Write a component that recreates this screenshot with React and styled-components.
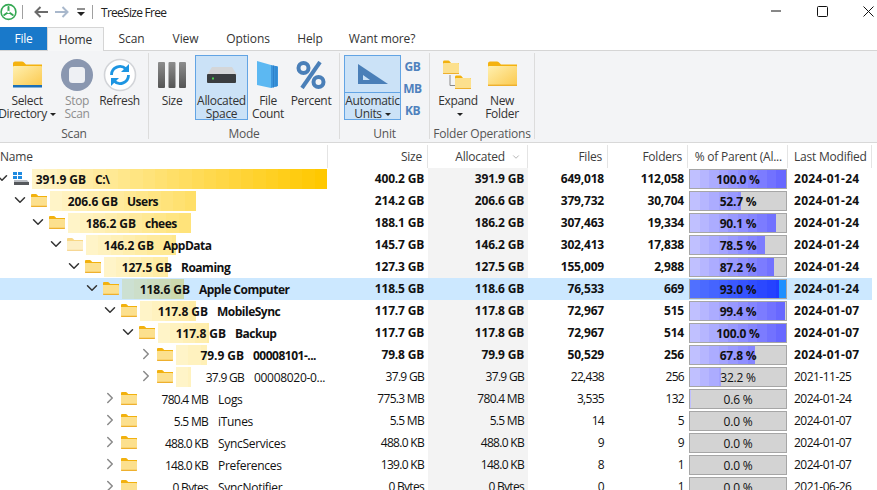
import React from "react"
import styled, { createGlobalStyle } from "styled-components"
import { ChevronDown, ChevronRight } from "lucide-react"

const GlobalStyle = createGlobalStyle`
  html, body {
    margin: 0;
    padding: 0;
    background: #fff;
  }
  body {
    font-family: "Open Sans", "Liberation Sans", sans-serif;
    font-size: 12px;
    letter-spacing: -0.22px;
    color: #111;
  }
`

// the tool paints its bars in visible bands, so build the gradient by hand
const mix = (a, b, t) => a.map((v, i) => Math.round(v + (b[i] - v) * t))
const bands = (from, to, n) => {
  const stops = []
  for (let i = 0; i < n; i++) {
    const c = mix(from, to, i / (n - 1))
    const col = `rgb(${c.join(",")})`
    stops.push(`${col} ${(i * 100) / n}%`, `${col} ${((i + 1) * 100) / n}%`)
  }
  return `linear-gradient(90deg, ${stops.join(",")})`
}

const YELLOW = bands([255, 244, 200], [255, 200, 0], 24)
const YELLOW_SEL = bands([204, 224, 210], [204, 181, 0], 24)
const BLUE = bands([192, 192, 255], [104, 104, 255], 10)
const BLUE_SEL = bands([80, 112, 255], [32, 60, 255], 10)

const rows = [
  { level: 0, open: true, bold: true, drive: true, bar: 295, label: "391.9 GB", name: "C:\\", size: "400.2 GB", alloc: "391.9 GB", files: "649,018", folders: "112,058", pct: 100, date: "2024-01-24" },
  { level: 1, open: true, bold: true, bar: 146, label: "206.6 GB", name: "Users", size: "214.2 GB", alloc: "206.6 GB", files: "379,732", folders: "30,704", pct: 52.7, date: "2024-01-24" },
  { level: 2, open: true, bold: true, bar: 123, label: "186.2 GB", name: "chees", size: "188.1 GB", alloc: "186.2 GB", files: "307,463", folders: "19,334", pct: 90.1, date: "2024-01-24" },
  { level: 3, open: true, bold: true, hidden: true, bar: 90, label: "146.2 GB", name: "AppData", size: "145.7 GB", alloc: "146.2 GB", files: "302,413", folders: "17,838", pct: 78.5, date: "2024-01-24" },
  { level: 4, open: true, bold: true, bar: 64, label: "127.5 GB", name: "Roaming", size: "127.3 GB", alloc: "127.5 GB", files: "155,009", folders: "2,988", pct: 87.2, date: "2024-01-24" },
  { level: 5, open: true, bold: true, selected: true, bar: 62, label: "118.6 GB", name: "Apple Computer", size: "118.5 GB", alloc: "118.6 GB", files: "76,533", folders: "669", pct: 93, date: "2024-01-24" },
  { level: 6, open: true, bold: true, bar: 56, label: "117.8 GB", name: "MobileSync", size: "117.7 GB", alloc: "117.8 GB", files: "72,967", folders: "515", pct: 99.4, date: "2024-01-07" },
  { level: 7, open: true, bold: true, bar: 51, label: "117.8 GB", name: "Backup", size: "117.7 GB", alloc: "117.8 GB", files: "72,967", folders: "514", pct: 100, date: "2024-01-07" },
  { level: 8, bold: true, bar: 31, label: "79.9 GB", name: "00008101-...", size: "79.8 GB", alloc: "79.9 GB", files: "50,529", folders: "256", pct: 67.8, date: "2024-01-07" },
  { level: 8, bar: 15, label: "37.9 GB", name: "00008020-0...", size: "37.9 GB", alloc: "37.9 GB", files: "22,438", folders: "256", pct: 32.2, date: "2021-11-25" },
  { level: 6, bar: 0, label: "780.4 MB", name: "Logs", size: "775.3 MB", alloc: "780.4 MB", files: "3,535", folders: "132", pct: 0.6, date: "2024-01-24" },
  { level: 6, bar: 0, label: "5.5 MB", name: "iTunes", size: "5.5 MB", alloc: "5.5 MB", files: "14", folders: "5", pct: 0, date: "2024-01-07" },
  { level: 6, bar: 0, label: "488.0 KB", name: "SyncServices", size: "488.0 KB", alloc: "488.0 KB", files: "9", folders: "9", pct: 0, date: "2024-01-07" },
  { level: 6, bar: 0, label: "148.0 KB", name: "Preferences", size: "139.0 KB", alloc: "148.0 KB", files: "8", folders: "1", pct: 0, date: "2024-01-07" },
  { level: 6, bar: 0, label: "0 Bytes", name: "SyncNotifier", size: "0 Bytes", alloc: "0 Bytes", files: "0", folders: "1", pct: 0, date: "2021-06-26" },
]

const Page = styled.div`
  width: 877px;
  height: 490px;
  overflow: hidden;
  display: flex;
  flex-direction: column;
  background: #fff;
`

const TitleBar = styled.div`
  width: 891px;
  height: 27px;
  box-sizing: border-box;
  padding-bottom: 3px;
  display: flex;
  align-items: center;
  flex: none;
`

const QuickIcon = styled.div`
  width: ${(p) => p.$w}px;
  height: 24px;
  display: flex;
  align-items: center;
  justify-content: center;
  flex: none;
`

const TitleRule = styled.div`
  width: 1px;
  height: 14px;
  background: #a0a0a0;
  flex: none;
`

const TitleText = styled.div`
  margin-left: 8px;
  flex: 1;
  color: #222;
  letter-spacing: -0.72px;
`

const WindowButton = styled.div`
  width: 46px;
  height: 22px;
  display: flex;
  align-items: center;
  justify-content: center;
  flex: none;
  align-self: flex-start;
`

const TabStrip = styled.div`
  height: 23px;
  display: flex;
  flex: none;
`

const FileTab = styled.div`
  width: 47px;
  background: #1979ca;
  color: #fff;
  display: flex;
  align-items: center;
  justify-content: center;
`

const Tab = styled.div`
  width: ${(p) => p.$w}px;
  display: flex;
  align-items: center;
  justify-content: center;
  color: #333;
  box-sizing: border-box;
  letter-spacing: -0.1px;
  ${(p) =>
    p.$active &&
    `
    border: 1px solid #d5d5d5;
    border-bottom: 0;
    background: #f6f7f8;
    height: 24px;
    position: relative;
    z-index: 1;
  `}
`

const Ribbon = styled.div`
  height: 93px;
  box-sizing: border-box;
  flex: none;
  display: flex;
  background: #f3f4f6;
  border-top: 1px solid #d5d5d5;
  border-bottom: 1px solid #d8d8d8;
`

const Group = styled.div`
  width: ${(p) => p.$w}px;
  box-sizing: border-box;
  flex: none;
  margin: 2px 0 3px;
  border-right: 1px solid #dcdcdc;
  display: flex;
  flex-direction: column;
  padding: 2px 0 0 ${(p) => p.$pad || 0}px;
`

const GroupBody = styled.div`
  display: flex;
  height: 65px;
`

const GroupLabel = styled.div`
  margin-left: ${(p) => (p.$pad ? -p.$pad : 0)}px;
  height: 13px;
  margin-top: 7px;
  line-height: 13px;
  text-align: center;
  color: #555;
`

const RibbonButton = styled.div`
  width: ${(p) => p.$w}px;
  box-sizing: border-box;
  flex: none;
  display: flex;
  flex-direction: column;
  align-items: center;
  text-align: center;
  color: ${(p) => (p.$disabled ? "#8e8e8e" : "#333")};
  ${(p) => p.$active && "background: #cbe2f7; border: 1px solid #62a4e4;"}
`

const IconSlot = styled.div`
  height: ${(p) => (p.$active ? 38 : 39)}px;
  width: 100%;
  box-sizing: border-box;
  flex: none;
  display: flex;
  align-items: center;
  justify-content: center;
  ${(p) => p.$split && "border-bottom: 1px solid #62a4e4; height: 37px; margin-bottom: 1px;"}
`

const ButtonLabel = styled.div`
  line-height: 13px;
  white-space: nowrap;
  letter-spacing: -0.32px;
`

const Caret = styled.span`
  display: inline-block;
  width: 0;
  height: 0;
  margin-left: 3px;
  vertical-align: 2px;
  border-left: 3px solid transparent;
  border-right: 3px solid transparent;
  border-top: 3px solid #222;
`

const UnitColumn = styled.div`
  width: 23px;
  display: flex;
  flex-direction: column;
  align-items: center;
  justify-content: space-around;
  padding: 1px 0 0;
`

const UnitLabel = styled.div`
  color: #4f81bd;
  font-weight: 700;
  letter-spacing: -0.4px;
  line-height: 22px;
`

const HeaderRow = styled.div`
  margin-top: 2px;
  height: 23px;
  display: flex;
  flex: none;
`

const HeaderCell = styled.div`
  width: ${(p) => p.$w}px;
  box-sizing: border-box;
  flex: none;
  display: flex;
  align-items: center;
  justify-content: ${(p) => p.$justify || "flex-end"};
  padding: ${(p) => p.$padding || "0 5px 0 0"};
  border-right: 1px solid #e4e4e4;
  color: #3c3c3c;
  white-space: nowrap;
`

const SortMark = styled.span`
  display: flex;
  margin-left: 6px;
  margin-right: 6px;
  color: #8a8a8a;
`

const Row = styled.div`
  height: 22px;
  display: flex;
  flex: none;
  width: 872px;
  font-weight: ${(p) => (p.$bold ? 700 : 400)};
  ${(p) => p.$selected && "background: #cce8ff;"}
`

const NameCell = styled.div`
  width: 328px;
  flex: none;
  display: flex;
  align-items: center;
  padding-left: ${(p) => p.$level * 18}px;
  box-sizing: border-box;
  white-space: nowrap;
`

const Toggle = styled.div`
  width: 13px;
  height: 18px;
  margin-left: -4.5px;
  margin-right: 4.5px;
  margin-top: -2px;
  display: flex;
  justify-content: center;
  flex: none;
  color: ${(p) => (p.$open ? "#333" : "#8a8a8a")};
  & > svg {
    flex: none;
  }
`

const NodeIcon = styled.div`
  width: 16px;
  flex: none;
  margin-right: 3px;
  margin-top: -2px;
  display: flex;
  opacity: ${(p) => (p.$hidden ? 0.5 : 1)};
`

const NameBlock = styled.div`
  position: relative;
  display: flex;
  align-items: center;
  height: 22px;
`

const SizeBar = styled.div`
  position: absolute;
  left: 0;
  top: 1px;
  bottom: 1px;
  width: ${(p) => p.$w}px;
  background: ${(p) => (p.$selected ? YELLOW_SEL : YELLOW)};
  background-size: 295px 100%;
  background-repeat: no-repeat;
`

const NodeSize = styled.div`
  position: relative;
  width: ${(p) => p.$w}px;
  text-align: right;
  flex: none;
  letter-spacing: ${(p) => (p.$bold ? "-0.05px" : "-0.72px")};
`

const NodeName = styled.div`
  position: relative;
  margin-left: ${(p) => (p.$bold ? 9 : 10)}px;
  letter-spacing: ${(p) => (p.$bold ? "-0.5px" : "-0.3px")};
`

const NumCell = styled.div`
  width: ${(p) => p.$w}px;
  flex: none;
  box-sizing: border-box;
  text-align: right;
  padding-right: 4px;
  line-height: 22px;
  letter-spacing: ${(p) => (p.$bold ? "-0.2px" : "-0.7px")};
  ${(p) => p.$sorted && !p.$selected && "background: #f3f3f3;"}
`

const PctCell = styled.div`
  width: 100px;
  flex: none;
  box-sizing: border-box;
  padding: 1px;
`

const PctTrack = styled.div`
  position: relative;
  height: 20px;
  box-sizing: border-box;
  border: 1px solid #a6a6a6;
  background: ${(p) => (p.$selected ? "#1e90ff" : "#d3d3d3")};
  display: flex;
  align-items: center;
  justify-content: center;
`

const PctFill = styled.div`
  position: absolute;
  left: 0;
  top: 0;
  bottom: 0;
  background: ${(p) => (p.$selected ? BLUE_SEL : BLUE)};
  background-size: 96px 100%;
  background-repeat: no-repeat;
`

const PctText = styled.span`
  position: relative;
`

const DateCell = styled.div`
  flex: 1;
  padding-left: 6px;
  line-height: 22px;
  letter-spacing: ${(p) => (p.$bold ? "0.28px" : "-0.52px")};
`

const FillerRow = styled.div`
  flex: 1;
`

const Logo = () => (
  <svg width="18" height="18" viewBox="0 0 18 18" fill="none">
    <circle cx="8.5" cy="9" r="7.4" stroke="#35a853" strokeWidth="1.6" />
    <path d="M8.5 9V4M8.5 9l-4.3 3M8.5 9l4.3 3" stroke="#35a853" strokeWidth="2" strokeLinecap="round" />
    <circle cx="8.5" cy="9" r="1.3" fill="#fff" />
  </svg>
)

const Arrow = ({ color, flip }) => (
  <svg width="14" height="12" viewBox="0 0 14 12" fill="none" style={flip ? { transform: "scaleX(-1)" } : undefined}>
    <path d="M6.5 1L1.5 6l5 5M1.5 6H14" stroke={color} strokeWidth="2" />
  </svg>
)

const QuickMenu = () => (
  <svg width="8" height="8" viewBox="0 0 8 8">
    <path d="M0 1h8" stroke="#222" strokeWidth="1" />
    <path d="M0 4h8L4 8z" fill="#222" />
  </svg>
)

const SmallFolder = () => (
  <svg width="16" height="13" viewBox="0 0 16 13">
    <path d="M0 1.2C0 .5.5 0 1.2 0h3.6c.5 0 .8.2 1.1.5L7.2 2H16v2H0z" fill="#f2b10e" />
    <path d="M0 3h15.2c.5 0 .8.3.8.8v8.2c0 .6-.4 1-1 1H1c-.6 0-1-.4-1-1z" fill="#fce08e" />
    <path d="M0 11.8h16v.2c0 .6-.4 1-1 1H1c-.6 0-1-.4-1-1z" fill="#eeb02e" />
  </svg>
)

const DriveIcon = () => (
  <svg width="16" height="13" viewBox="0 0 16 13">
    <rect x="0" y="0" width="4" height="3" fill="#1f8ae0" />
    <rect x="5" y="0" width="4" height="3" fill="#1f8ae0" />
    <rect x="0" y="4" width="4" height="3" fill="#1f8ae0" />
    <rect x="5" y="4" width="4" height="3" fill="#1f8ae0" />
    <path d="M1 8h13l2 2.5H1z" fill="#b8bcc2" />
    <rect x="1" y="10" width="15" height="3" fill="#55585c" />
  </svg>
)

const BigFolder = ({ strip }) => (
  <svg width="29" height="27" viewBox="0 0 29 27">
    <defs>
      <linearGradient id="bf" x1="0" y1="0" x2="1" y2="1">
        <stop offset="0" stopColor="#fff0b0" />
        <stop offset="1" stopColor="#fbc94e" />
      </linearGradient>
    </defs>
    <path d="M0 2.5C0 1.2 1 .5 2 .5h7c.8 0 1.3.3 1.8.8L13 3.5h16V8H0z" fill="#f4b20f" />
    <rect x="0" y="5" width="29" height="20" rx="1" fill="url(#bf)" />
    {strip ? <rect x="0" y="24" width="29" height="2.5" fill="#1a6fb8" /> : <rect x="0" y="23.6" width="29" height="1.4" fill="#eeb02e" />}
  </svg>
)

const StopIcon = () => (
  <svg width="34" height="34" viewBox="0 0 34 34">
    <circle cx="17" cy="17" r="16" fill="#8a97b0" />
    <rect x="9" y="9" width="16" height="16" rx="3.5" fill="#eef0f4" />
  </svg>
)

const RefreshIcon = () => (
  <svg width="34" height="34" viewBox="0 0 34 34" fill="none">
    <circle cx="17" cy="17" r="15.5" fill="#fff" stroke="#d2d4d8" strokeWidth="1.6" />
    <path d="M8.5 17a8.5 8.5 0 0 1 14.5-6" stroke="#1d95e2" strokeWidth="2.8" />
    <path d="M25.5 17A8.5 8.5 0 0 1 11 23" stroke="#1d95e2" strokeWidth="2.8" />
    <path d="M26 6v8h-8z" fill="#1d95e2" />
    <path d="M8 28v-8h8z" fill="#1d95e2" />
  </svg>
)

const SizeIcon = () => (
  <svg width="28" height="26" viewBox="0 0 28 26">
    <defs>
      <linearGradient id="sb" x1="0" y1="0" x2="0" y2="1">
        <stop offset="0" stopColor="#8d8d8d" />
        <stop offset="1" stopColor="#555" />
      </linearGradient>
    </defs>
    <rect x="0" y="0" width="7" height="26" rx="1" fill="url(#sb)" />
    <rect x="10.5" y="0" width="7" height="26" rx="1" fill="url(#sb)" />
    <rect x="21" y="0" width="7" height="26" rx="1" fill="url(#sb)" />
  </svg>
)

const DiskIcon = () => (
  <svg width="30" height="16" viewBox="0 0 30 16">
    <path d="M5 0h20l5 8H0z" fill="#d4d6d8" />
    <rect x="0" y="7" width="29" height="9" rx="1" fill="#3a3d40" />
    <rect x="5" y="10.5" width="2" height="2" fill="#45d24a" />
  </svg>
)

const FileCountIcon = () => (
  <svg width="22" height="27" viewBox="0 0 22 27">
    <path d="M0 0l14 4v23L0 24z" fill="#5cb8f2" />
    <path d="M14 4l7 1.5V25l-7 2z" fill="#3a94dc" />
    <path d="M16.5 4.5v22M19 5v21" stroke="#2a7cc4" strokeWidth="0.8" />
  </svg>
)

const PercentIcon = () => (
  <svg width="30" height="28" viewBox="0 0 30 28" fill="none">
    <ellipse cx="7.5" cy="7" rx="5" ry="5" stroke="#4a7fb8" strokeWidth="4" />
    <ellipse cx="22.5" cy="21" rx="5" ry="5" stroke="#4a7fb8" strokeWidth="4" />
    <path d="M24 1L6 27" stroke="#4a7fb8" strokeWidth="4" />
  </svg>
)

const SetSquare = () => (
  <svg width="30" height="20" viewBox="0 0 30 20">
    <path fillRule="evenodd" d="M0 0l30 20H0zM5 11v5h7z" fill="#4a7fb8" />
  </svg>
)

const ExpandIcon = () => (
  <svg width="30" height="30" viewBox="0 0 30 30" fill="none">
    <path d="M7 15v10.5h6" stroke="#8a8a8a" strokeWidth="1" />
    <path d="M0 2c0-.8.5-1.5 1.3-1.5h4c.5 0 1 .3 1.3.7L8 3h8v3H0z" fill="#f2b10e" />
    <rect x="0" y="3" width="16" height="11" rx="1" fill="#fce08e" />
    <rect x="0" y="13" width="16" height="1" fill="#eeb02e" />
    <path d="M12 17c0-.8.5-1.5 1.3-1.5h4c.5 0 1 .3 1.3.7L20 18h8v3H12z" fill="#f2b10e" />
    <rect x="12" y="18" width="16" height="11" rx="1" fill="#fce08e" />
    <rect x="12" y="28" width="16" height="1" fill="#eeb02e" />
  </svg>
)

const NodeRow = ({ row }) => (
  <Row $bold={row.bold} $selected={row.selected}>
    <NameCell $level={row.level}>
      <Toggle $open={row.open}>
        {row.open ? <ChevronDown size={18} strokeWidth={2} /> : <ChevronRight size={18} strokeWidth={2} />}
      </Toggle>
      <NodeIcon $hidden={row.hidden}>{row.drive ? <DriveIcon /> : <SmallFolder />}</NodeIcon>
      <NameBlock>
        {row.bar > 0 && <SizeBar $w={row.bar} $selected={row.selected} />}
        <NodeSize $w={row.level === 0 ? 54 : 68} $bold={row.bold}>{row.label}</NodeSize>
        <NodeName $bold={row.bold}>{row.name}</NodeName>
      </NameBlock>
    </NameCell>
    <NumCell $w={100} $bold={row.bold}>{row.size}</NumCell>
    <NumCell $w={100} $bold={row.bold} $sorted $selected={row.selected}>{row.alloc}</NumCell>
    <NumCell $w={80} $bold={row.bold}>{row.files}</NumCell>
    <NumCell $w={80} $bold={row.bold}>{row.folders}</NumCell>
    <PctCell>
      <PctTrack $selected={row.selected}>
        <PctFill $selected={row.selected} style={{ width: `${row.pct}%` }} />
        <PctText>{row.pct.toFixed(1)} %</PctText>
      </PctTrack>
    </PctCell>
    <DateCell $bold={row.bold}>{row.date}</DateCell>
  </Row>
)

export default function App() {
  return (
    <Page>
      <GlobalStyle />
      <TitleBar>
        <QuickIcon $w={18}><Logo /></QuickIcon>
        <QuickIcon $w={4} />
        <TitleRule />
        <QuickIcon $w={11} />
        <QuickIcon $w={14}><Arrow color="#6b6b6b" /></QuickIcon>
        <QuickIcon $w={7} />
        <QuickIcon $w={14}><Arrow color="#a9b8cc" flip /></QuickIcon>
        <QuickIcon $w={7} />
        <QuickIcon $w={10}><QuickMenu /></QuickIcon>
        <QuickIcon $w={6} />
        <TitleRule />
        <TitleText>TreeSize Free</TitleText>
        <WindowButton>
          <svg width="10" height="10" viewBox="0 0 10 10"><path d="M0 5h10" stroke="#111" /></svg>
        </WindowButton>
        <WindowButton>
          <svg width="11" height="11" viewBox="0 0 11 11" fill="none"><rect x=".5" y=".5" width="10" height="10" rx="1" stroke="#111" /></svg>
        </WindowButton>
        <WindowButton>
          <svg width="11" height="11" viewBox="0 0 11 11" fill="none"><path d="M.5.5l10 10M10.5.5l-10 10" stroke="#111" /></svg>
        </WindowButton>
      </TitleBar>
      <TabStrip>
        <FileTab>File</FileTab>
        <Tab $w={57} $active>Home</Tab>
        <Tab $w={55}>Scan</Tab>
        <Tab $w={53}>View</Tab>
        <Tab $w={72}>Options</Tab>
        <Tab $w={52}>Help</Tab>
        <Tab $w={92}>Want more?</Tab>
      </TabStrip>
      <Ribbon>
        <Group $w={149}>
          <GroupBody>
            <RibbonButton $w={54}>
              <IconSlot><BigFolder strip /></IconSlot>
              <ButtonLabel>Select<br />Directory<Caret /></ButtonLabel>
            </RibbonButton>
            <RibbonButton $w={46} $disabled>
              <IconSlot><StopIcon /></IconSlot>
              <ButtonLabel>Stop<br />Scan</ButtonLabel>
            </RibbonButton>
            <RibbonButton $w={39}>
              <IconSlot><RefreshIcon /></IconSlot>
              <ButtonLabel>Refresh</ButtonLabel>
            </RibbonButton>
          </GroupBody>
          <GroupLabel>Scan</GroupLabel>
        </Group>
        <Group $w={191}>
          <GroupBody>
            <RibbonButton $w={46}>
              <IconSlot><SizeIcon /></IconSlot>
              <ButtonLabel>Size</ButtonLabel>
            </RibbonButton>
            <RibbonButton $w={53} $active>
              <IconSlot $active><DiskIcon /></IconSlot>
              <ButtonLabel>Allocated<br />Space</ButtonLabel>
            </RibbonButton>
            <RibbonButton $w={40}>
              <IconSlot><FileCountIcon /></IconSlot>
              <ButtonLabel>File<br />Count</ButtonLabel>
            </RibbonButton>
            <RibbonButton $w={46}>
              <IconSlot><PercentIcon /></IconSlot>
              <ButtonLabel>Percent</ButtonLabel>
            </RibbonButton>
          </GroupBody>
          <GroupLabel>Mode</GroupLabel>
        </Group>
        <Group $w={90} $pad={4}>
          <GroupBody>
            <RibbonButton $w={57} $active>
              <IconSlot $active $split><SetSquare /></IconSlot>
              <ButtonLabel>Automatic<br />Units<Caret /></ButtonLabel>
            </RibbonButton>
            <UnitColumn>
              <UnitLabel>GB</UnitLabel>
              <UnitLabel>MB</UnitLabel>
              <UnitLabel>KB</UnitLabel>
            </UnitColumn>
          </GroupBody>
          <GroupLabel $pad={4}>Unit</GroupLabel>
        </Group>
        <Group $w={105} $pad={6}>
          <GroupBody>
            <RibbonButton $w={44}>
              <IconSlot><ExpandIcon /></IconSlot>
              <ButtonLabel>Expand<br /><Caret /></ButtonLabel>
            </RibbonButton>
            <RibbonButton $w={44}>
              <IconSlot><BigFolder /></IconSlot>
              <ButtonLabel>New<br />Folder</ButtonLabel>
            </RibbonButton>
          </GroupBody>
          <GroupLabel $pad={6}>Folder Operations</GroupLabel>
        </Group>
      </Ribbon>
      <HeaderRow>
        <HeaderCell $w={328} $justify="flex-start" $padding="0">Name</HeaderCell>
        <HeaderCell $w={100}>Size</HeaderCell>
        <HeaderCell $w={100} $padding="0">Allocated<SortMark><ChevronDown size={10} strokeWidth={1.5} /></SortMark></HeaderCell>
        <HeaderCell $w={80}>Files</HeaderCell>
        <HeaderCell $w={80}>Folders</HeaderCell>
        <HeaderCell $w={100}>% of Parent (Al...</HeaderCell>
        <HeaderCell $w={84} $justify="flex-start" $padding="0 0 0 6px">Last Modified</HeaderCell>
      </HeaderRow>
      {rows.map((row) => (
        <NodeRow key={row.name} row={row} />
      ))}
      <FillerRow />
    </Page>
  )
}
